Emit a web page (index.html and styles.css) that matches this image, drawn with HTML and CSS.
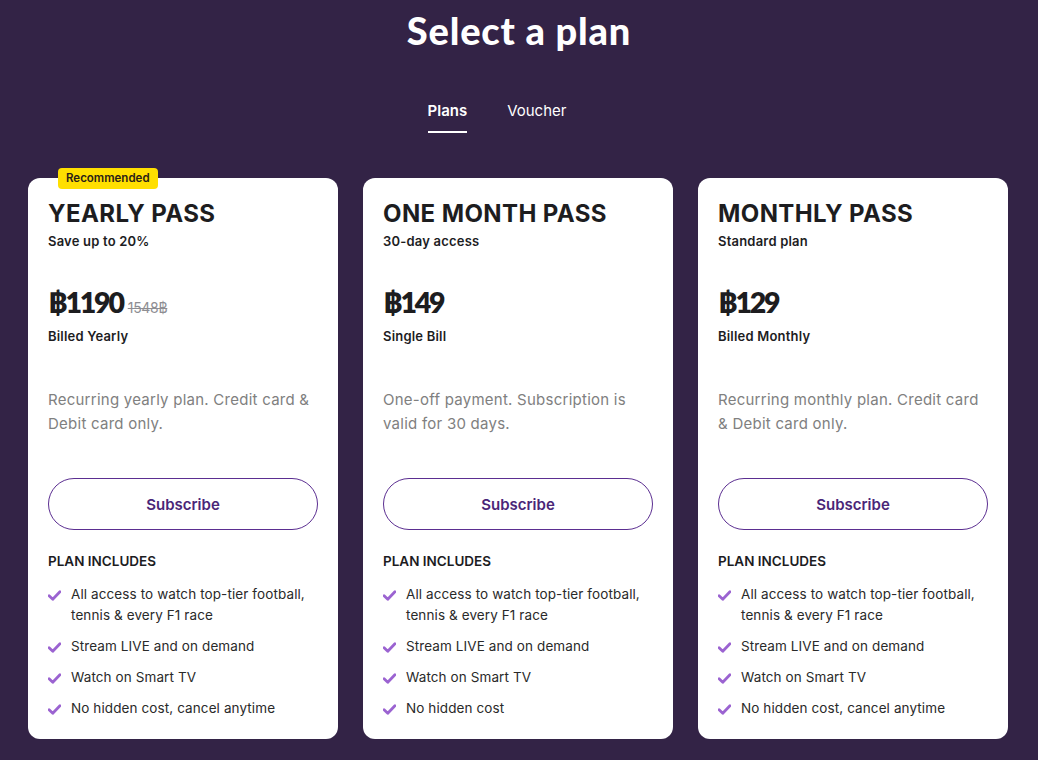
FILE: index.html
```html
<!DOCTYPE html>
<html>
<head>
<meta charset="utf-8">
<link rel="stylesheet" href="styles.css">
</head>
<body>
<main class="page">
  <h1 class="title">Select a plan</h1>
  <nav class="tabs">
    <span class="tab active">Plans</span>
    <span class="tab">Voucher</span>
  </nav>
  <section class="cards">
    <article class="card">
      <span class="badge">Recommended</span>
      <h2 class="name">YEARLY PASS</h2>
      <p class="sub">Save up to 20%</p>
      <div class="price"><span class="amount">฿1190</span><span class="old">1548฿</span></div>
      <p class="billing">Billed Yearly</p>
      <p class="desc">Recurring yearly plan. Credit card &amp; Debit card only.</p>
      <button class="btn">Subscribe</button>
      <h3 class="inc">PLAN INCLUDES</h3>
      <ul class="list">
        <li><svg class="chk" viewBox="0 0 12 10"><path d="M1 5.2 L4.4 8.4 L11 1.6" /></svg><span>All access to watch top-tier football, tennis &amp; every F1 race</span></li>
        <li><svg class="chk" viewBox="0 0 12 10"><path d="M1 5.2 L4.4 8.4 L11 1.6" /></svg><span>Stream LIVE and on demand</span></li>
        <li><svg class="chk" viewBox="0 0 12 10"><path d="M1 5.2 L4.4 8.4 L11 1.6" /></svg><span>Watch on Smart TV</span></li>
        <li><svg class="chk" viewBox="0 0 12 10"><path d="M1 5.2 L4.4 8.4 L11 1.6" /></svg><span>No hidden cost, cancel anytime</span></li>
      </ul>
    </article>
    <article class="card">
      <h2 class="name">ONE MONTH PASS</h2>
      <p class="sub">30-day access</p>
      <div class="price"><span class="amount">฿149</span></div>
      <p class="billing">Single Bill</p>
      <p class="desc">One-off payment. Subscription is valid for 30 days.</p>
      <button class="btn">Subscribe</button>
      <h3 class="inc">PLAN INCLUDES</h3>
      <ul class="list">
        <li><svg class="chk" viewBox="0 0 12 10"><path d="M1 5.2 L4.4 8.4 L11 1.6" /></svg><span>All access to watch top-tier football, tennis &amp; every F1 race</span></li>
        <li><svg class="chk" viewBox="0 0 12 10"><path d="M1 5.2 L4.4 8.4 L11 1.6" /></svg><span>Stream LIVE and on demand</span></li>
        <li><svg class="chk" viewBox="0 0 12 10"><path d="M1 5.2 L4.4 8.4 L11 1.6" /></svg><span>Watch on Smart TV</span></li>
        <li><svg class="chk" viewBox="0 0 12 10"><path d="M1 5.2 L4.4 8.4 L11 1.6" /></svg><span>No hidden cost</span></li>
      </ul>
    </article>
    <article class="card">
      <h2 class="name">MONTHLY PASS</h2>
      <p class="sub">Standard plan</p>
      <div class="price"><span class="amount">฿129</span></div>
      <p class="billing">Billed Monthly</p>
      <p class="desc">Recurring monthly plan. Credit card &amp; Debit card only.</p>
      <button class="btn">Subscribe</button>
      <h3 class="inc">PLAN INCLUDES</h3>
      <ul class="list">
        <li><svg class="chk" viewBox="0 0 12 10"><path d="M1 5.2 L4.4 8.4 L11 1.6" /></svg><span>All access to watch top-tier football, tennis &amp; every F1 race</span></li>
        <li><svg class="chk" viewBox="0 0 12 10"><path d="M1 5.2 L4.4 8.4 L11 1.6" /></svg><span>Stream LIVE and on demand</span></li>
        <li><svg class="chk" viewBox="0 0 12 10"><path d="M1 5.2 L4.4 8.4 L11 1.6" /></svg><span>Watch on Smart TV</span></li>
        <li><svg class="chk" viewBox="0 0 12 10"><path d="M1 5.2 L4.4 8.4 L11 1.6" /></svg><span>No hidden cost, cancel anytime</span></li>
      </ul>
    </article>
  </section>
</main>
</body>
</html>
```
FILE: styles.css
```css
* { box-sizing: border-box; }
html, body { margin: 0; padding: 0; }
body {
  background: #332346;
  font-family: "Inter", "Noto Sans", sans-serif;
  color: #1d1d1f;
  height: 760px;
  overflow: hidden;
}
.page {
  display: flex;
  flex-direction: column;
  align-items: center;
  padding-top: 7px;
}
.title {
  margin: 0;
  color: #fff;
  font-family: "Lato", sans-serif;
  font-size: 38px;
  font-weight: 900;
  line-height: 46px;
  letter-spacing: 0.8px;
}
.tabs {
  display: flex;
  gap: 40px;
  margin-top: 48px;
  margin-right: 44px;
}
.tab {
  color: #fff;
  font-size: 15px;
  font-weight: 400;
  line-height: 20px;
  padding-bottom: 10px;
  border-bottom: 2px solid transparent;
}
.tab.active {
  font-weight: 600;
  border-bottom-color: #fff;
}
.cards {
  display: flex;
  gap: 25px;
  margin-top: 45px;
  margin-right: 2px;
}
.card {
  position: relative;
  width: 310px;
  height: 561px;
  background: #fff;
  border-radius: 12px;
  padding: 23px 20px 0 20px;
  display: flex;
  flex-direction: column;
}
.badge {
  position: absolute;
  top: -10px;
  left: 30px;
  background: #ffdf00;
  color: #2a2117;
  font-size: 11.5px;
  font-weight: 600;
  line-height: 21px;
  padding: 0 8px;
  border-radius: 4px;
}
.name {
  margin: 0;
  font-size: 24px;
  font-weight: 700;
  line-height: 26px;
  letter-spacing: 0.4px;
}
.sub {
  margin: 5px 0 0;
  font-size: 13px;
  font-weight: 600;
  line-height: 18px;
  letter-spacing: 0.2px;
}
.price {
  display: flex;
  align-items: baseline;
  gap: 5px;
  margin-top: 34px;
}
.amount {
  font-family: "Lato", sans-serif;
  font-size: 28.5px;
  font-weight: 800;
  line-height: 36px;
  letter-spacing: -2.2px;
}
.old {
  font-size: 14px;
  color: #8e8e93;
  text-decoration: line-through;
  letter-spacing: -0.3px;
}
.billing {
  margin: 7px 0 0;
  font-size: 13px;
  font-weight: 600;
  line-height: 18px;
  letter-spacing: 0.2px;
}
.desc {
  margin: 43px 0 0;
  font-size: 15px;
  line-height: 24px;
  color: #808080;
  height: 48px;
  letter-spacing: 0.25px;
}
.btn {
  margin-top: 42px;
  height: 52px;
  width: 100%;
  border: 1px solid #5b2e91;
  border-radius: 26px;
  background: #fff;
  color: #4a2678;
  font-family: inherit;
  font-size: 15px;
  font-weight: 600;
}
.inc {
  margin: 22px 0 0;
  font-size: 13.5px;
  font-weight: 600;
  line-height: 18px;
}
.list {
  list-style: none;
  margin: 14px 0 0;
  padding: 0;
  display: flex;
  flex-direction: column;
  gap: 10px;
}
.list li {
  display: flex;
  align-items: flex-start;
  gap: 10px;
  font-size: 13.5px;
  line-height: 21px;
  color: #2a2a2a;
  letter-spacing: 0.1px;
}
.chk {
  flex: none;
  width: 13px;
  height: 11px;
  margin-top: 6px;
}
.chk path {
  fill: none;
  stroke: #9b63d1;
  stroke-width: 2.6;
  stroke-linecap: round;
  stroke-linejoin: round;
}
```
